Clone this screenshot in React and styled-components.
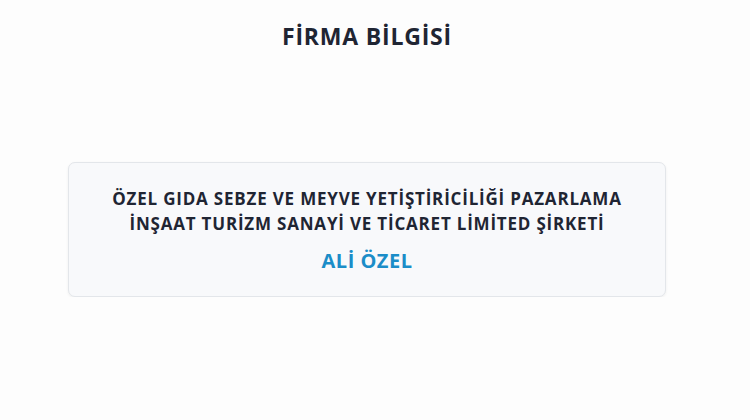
import React from 'react';
import styled, { createGlobalStyle } from 'styled-components';

const GlobalStyle = createGlobalStyle`
  html, body {
    margin: 0;
    padding: 0;
    background: #fdfdfd;
  }
  body {
    font-family: "Open Sans", "Noto Sans", sans-serif;
  }
`;

const Page = styled.div`
  width: 734px;
  display: flex;
  flex-direction: column;
  align-items: center;
  padding-top: 20px;
`;

const Heading = styled.h1`
  margin: 0;
  font-size: 23px;
  font-weight: 700;
  color: #1f2533;
  letter-spacing: 0.8px;
  line-height: 32px;
`;

const Card = styled.div`
  margin-top: 110px;
  width: 598px;
  box-sizing: border-box;
  background: #f8f9fb;
  border: 1px solid #e3e6ea;
  border-radius: 7px;
  box-shadow: 0 1px 3px rgba(0, 0, 0, 0.06);
  padding: 23px 20px 22px;
  display: flex;
  flex-direction: column;
  align-items: center;
  text-align: center;
`;

const Company = styled.p`
  margin: 0;
  font-size: 17px;
  font-weight: 700;
  line-height: 25px;
  color: #1f2533;
  letter-spacing: 0.8px;
`;

const Owner = styled.p`
  margin: 12px 0 0;
  font-size: 20px;
  font-weight: 700;
  line-height: 26px;
  color: #1b8dc8;
  letter-spacing: 0.5px;
`;

export default function App() {
  return (
    <>
      <GlobalStyle />
      <Page>
        <Heading>FİRMA BİLGİSİ</Heading>
        <Card>
          <Company>
            ÖZEL GIDA SEBZE VE MEYVE YETİŞTİRİCİLİĞİ PAZARLAMA
            <br />
            İNŞAAT TURİZM SANAYİ VE TİCARET LİMİTED ŞİRKETİ
          </Company>
          <Owner>ALİ ÖZEL</Owner>
        </Card>
      </Page>
    </>
  );
}
